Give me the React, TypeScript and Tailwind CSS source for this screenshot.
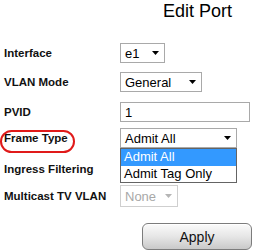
import React from "react";

function Arrow({ color = "#000" }: { color?: string }) {
  return (
    <svg width="7" height="4" viewBox="0 0 7 4" className="shrink-0">
      <path d="M0 0 H7 L3.5 4 Z" fill={color} />
    </svg>
  );
}

function Select({
  value,
  w,
  h = "h-[20px]",
  disabled = false,
}: {
  value: string;
  w: string;
  h?: string;
  disabled?: boolean;
}) {
  return (
    <div
      className={`${w} ${h} flex items-center justify-between border bg-white pl-[4px] pr-[5px] text-[13px] leading-[15px] ${
        disabled ? "border-[#cfcfcf] text-[#a8a8a8]" : "border-[#a9a9a9] text-black"
      }`}
    >
      <span>{value}</span>
      <Arrow color={disabled ? "#b5b5b5" : "#000"} />
    </div>
  );
}

function Row({
  label,
  mt,
  h = "h-[20px]",
  children,
}: {
  label: string;
  mt: string;
  h?: string;
  children?: React.ReactNode;
}) {
  return (
    <div className={`${mt} ${h} flex items-center`}>
      <div className="w-[116px] text-[11.5px] font-bold leading-[14px] text-[#111]">{label}</div>
      {children}
    </div>
  );
}

export default function App() {
  return (
    <div
      className="relative w-[258px] h-[252px] overflow-hidden bg-white pl-[4px]"
      style={{ fontFamily: '"Liberation Sans", Arial, sans-serif' }}
    >
      <div className="mt-[1px] h-[20px] pl-[159px] text-[18px] leading-[20px] text-black">Edit Port</div>

      <Row label="Interface" mt="mt-[22px]">
        <Select value="e1" w="w-[45px]" />
      </Row>
      <Row label="VLAN Mode" mt="mt-[9px]">
        <Select value="General" w="w-[82px]" />
      </Row>
      <Row label="PVID" mt="mt-[10px]">
        <div className="flex h-[20px] w-[130px] items-center border border-[#a9a9a9] pl-[4px] text-[13px] leading-[15px] text-black">
          1
        </div>
      </Row>
      <Row label="Frame Type" mt="mt-[6px]">
        <div className="relative">
          <Select value="Admit All" w="w-[117px]" />
          <div className="absolute left-0 top-[20px] z-10 w-[117px] border border-[#646464] bg-white text-[13px] leading-[16px]">
            <div className="h-[17px] bg-[#3399ff] pl-[3px] text-white">Admit All</div>
            <div className="h-[16px] pl-[3px] text-black">Admit Tag Only</div>
          </div>
        </div>
      </Row>
      <Row label="Ingress Filtering" mt="mt-[11px]" />
      <Row label="Multicast TV VLAN" mt="mt-[6px]" h="h-[22px]">
        <Select value="None" w="w-[58px]" h="h-[22px]" disabled />
      </Row>

      <div className="mt-[16px] pl-[138px]">
        <div className="flex h-[27px] w-[110px] items-center justify-center rounded-[6px] border border-[#7c7c7c] bg-gradient-to-b from-[#fbfbfb] via-[#e6e6e6] to-[#c9c9c9] text-[14px] leading-[16px] text-[#111] shadow-[inset_0_1px_0_#ffffff]">
          Apply
        </div>
      </div>

      <div className="pointer-events-none absolute left-[0px] top-[130px] h-[23px] w-[75px] rounded-full border-2 border-[#e01a1a]" />
    </div>
  );
}
